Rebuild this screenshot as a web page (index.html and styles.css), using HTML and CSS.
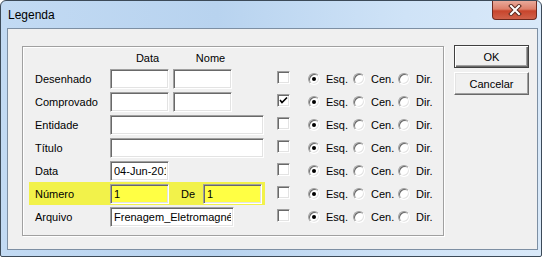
FILE: index.html
```html
<!DOCTYPE html>
<html lang="pt">
  <head>
    <meta charset="UTF-8" />
    <title>Legenda</title>
    <link rel="stylesheet" href="styles.css">
  </head>
  <body>
    <div class="window">
      <div class="titlebar">
        <span class="title">Legenda</span>
        <div class="close">
          <svg width="14" height="12" viewBox="0 0 14 12">
            <path d="M3 2 L11 10 M11 2 L3 10" stroke="#5a2a20" stroke-width="4" stroke-linecap="square" />
            <path d="M3 2 L11 10 M11 2 L3 10" stroke="#ffffff" stroke-width="2" stroke-linecap="square" />
          </svg>
        </div>
      </div>

      <div class="client">
        <div class="group">
          <div class="head">
            <span class="col">Data</span>
            <span class="col">Nome</span>
          </div>

          <div class="row">
            <div class="fields">
              <span class="label">Desenhado</span>
              <input class="field short" type="text" />
              <input class="field short gap" type="text" />
            </div>
            <span class="check"></span>
            <div class="align">
              <span class="opt"><span class="radio on"></span>Esq.</span>
              <span class="opt"><span class="radio"></span>Cen.</span>
              <span class="opt"><span class="radio"></span>Dir.</span>
            </div>
          </div>

          <div class="row">
            <div class="fields">
              <span class="label">Comprovado</span>
              <input class="field short" type="text" />
              <input class="field short gap" type="text" />
            </div>
            <span class="check">
              <svg width="11" height="11" viewBox="0 0 11 11">
                <path d="M2 5 L4 7.5 L9 2.5" fill="none" stroke="#000" stroke-width="1.6" />
              </svg>
            </span>
            <div class="align">
              <span class="opt"><span class="radio on"></span>Esq.</span>
              <span class="opt"><span class="radio"></span>Cen.</span>
              <span class="opt"><span class="radio"></span>Dir.</span>
            </div>
          </div>

          <div class="row">
            <div class="fields">
              <span class="label">Entidade</span>
              <input class="field wide" type="text" />
            </div>
            <span class="check"></span>
            <div class="align">
              <span class="opt"><span class="radio on"></span>Esq.</span>
              <span class="opt"><span class="radio"></span>Cen.</span>
              <span class="opt"><span class="radio"></span>Dir.</span>
            </div>
          </div>

          <div class="row">
            <div class="fields">
              <span class="label">Título</span>
              <input class="field wide" type="text" />
            </div>
            <span class="check"></span>
            <div class="align">
              <span class="opt"><span class="radio on"></span>Esq.</span>
              <span class="opt"><span class="radio"></span>Cen.</span>
              <span class="opt"><span class="radio"></span>Dir.</span>
            </div>
          </div>

          <div class="row">
            <div class="fields">
              <span class="label">Data</span>
              <input class="field short" type="text" value="04-Jun-2013" />
            </div>
            <span class="check"></span>
            <div class="align">
              <span class="opt"><span class="radio on"></span>Esq.</span>
              <span class="opt"><span class="radio"></span>Cen.</span>
              <span class="opt"><span class="radio"></span>Dir.</span>
            </div>
          </div>

          <div class="row">
            <div class="fields marked">
              <span class="label">Número</span>
              <input class="field short" type="text" value="1" />
              <span class="de">De</span>
              <input class="field short" type="text" value="1" />
            </div>
            <span class="check"></span>
            <div class="align">
              <span class="opt"><span class="radio on"></span>Esq.</span>
              <span class="opt"><span class="radio"></span>Cen.</span>
              <span class="opt"><span class="radio"></span>Dir.</span>
            </div>
          </div>

          <div class="row">
            <div class="fields">
              <span class="label">Arquivo</span>
              <input class="field file" type="text" value="Frenagem_Eletromagnética" />
            </div>
            <span class="check"></span>
            <div class="align">
              <span class="opt"><span class="radio on"></span>Esq.</span>
              <span class="opt"><span class="radio"></span>Cen.</span>
              <span class="opt"><span class="radio"></span>Dir.</span>
            </div>
          </div>
        </div>

        <div class="buttons">
          <button class="btn default">OK</button>
          <button class="btn">Cancelar</button>
        </div>
      </div>
    </div>
  </body>
</html>
```

FILE: styles.css
```css
* {
  margin: 0;
  padding: 0;
  box-sizing: border-box;
}

body {
  background: #ffffff;
  font-family: "Liberation Sans", Arial, sans-serif;
  font-size: 11px;
  color: #000;
}

/* Window frame */
.window {
  width: 542px;
  height: 257px;
  border: 1px solid #3c4a58;
  border-radius: 6px 6px 2px 2px;
  background: linear-gradient(to right, #c2daf3 0%, #b8d3ef 40%, #cfe3f7 75%, #d9e9f9 100%);
  display: flex;
  flex-direction: column;
}

.titlebar {
  height: 27px;
  display: flex;
  align-items: flex-start;
}

.title {
  font-size: 12px;
  padding: 7px 0 0 7px;
  color: #000;
}

.close {
  margin-left: auto;
  margin-right: 4px;
  width: 45px;
  height: 19px;
  border: 1px solid #6e2a1f;
  border-top: none;
  border-radius: 0 0 4px 4px;
  background: linear-gradient(to bottom, #e9a99a 0%, #dd7f6a 45%, #c8452c 55%, #d0614a 100%);
  display: flex;
  align-items: center;
  justify-content: center;
}

/* Client area */
.client {
  flex: 1;
  margin: 0 3px 6px 6px;
  border: 1px solid #7d8fa3;
  background: #f0f0f0;
  display: flex;
  align-items: flex-start;
}

.group {
  margin: 17px 0 0 14px;
  width: 422px;
  height: 190px;
  border: 1px solid #a0a0a0;
  box-shadow: inset 1px 1px 0 #ffffff, 1px 1px 0 #ffffff;
  padding: 5px 0 0 6px;
}

.head {
  height: 15px;
  padding-left: 87px;
  display: flex;
}

.col {
  width: 63px;
  text-align: center;
}

.row {
  height: 23px;
  display: flex;
  align-items: center;
}

.fields {
  width: 237px;
  height: 23px;
  padding-left: 6px;
  display: flex;
  align-items: center;
}

.fields.marked {
  background: #f2f24a;
}

.label {
  width: 75px;
}

.field {
  height: 20px;
  border: 1px solid;
  border-color: #a0a0a0 #ffffff #ffffff #a0a0a0;
  box-shadow: inset 1px 1px 0 #696969, inset -1px -1px 0 #e3e3e3;
  background: #ffffff;
  font-family: "Liberation Sans", Arial, sans-serif;
  font-size: 11px;
  padding: 1px 2px 0 3px;
  outline: none;
  color: #000;
}

.marked .field {
  background: #ffff44;
}

.short {
  width: 59px;
}

.gap {
  margin-left: 4px;
}

.wide {
  width: 154px;
}

.file {
  width: 124px;
}

.de {
  width: 22px;
  margin-left: 12px;
}

/* Check boxes and radio buttons */
.check {
  width: 13px;
  height: 13px;
  margin: -2px 0 0 12px;
  border: 1px solid;
  border-color: #a0a0a0 #ffffff #ffffff #a0a0a0;
  box-shadow: inset 1px 1px 0 #696969, inset -1px -1px 0 #e3e3e3;
  background: #ffffff;
  display: flex;
  align-items: center;
  justify-content: center;
}

.align {
  display: flex;
  margin-left: 18px;
}

.opt {
  width: 45px;
  display: flex;
  align-items: center;
}

.radio {
  width: 12px;
  height: 12px;
  margin-right: 6px;
  border-radius: 50%;
  border: 1px solid;
  border-color: #a0a0a0 #ffffff #ffffff #a0a0a0;
  box-shadow: inset 1px 1px 0 #696969, inset -1px -1px 0 #e3e3e3;
  background: #ffffff;
  display: flex;
  align-items: center;
  justify-content: center;
}

.radio.on::after {
  content: "";
  width: 4px;
  height: 4px;
  border-radius: 50%;
  background: #000;
}

/* Buttons */
.buttons {
  margin: 16px 0 0 10px;
  display: flex;
  flex-direction: column;
  gap: 4px;
}

.btn {
  width: 75px;
  height: 23px;
  background: #f0f0f0;
  border: 1px solid;
  border-color: #ffffff #696969 #696969 #ffffff;
  box-shadow: inset -1px -1px 0 #a0a0a0, inset 1px 1px 0 #e3e3e3;
  font-family: "Liberation Sans", Arial, sans-serif;
  font-size: 11px;
  color: #000;
}

.btn.default {
  border: 1px solid #404040;
  box-shadow: inset 1px 1px 0 #ffffff, inset -1px -1px 0 #696969, inset -2px -2px 0 #a0a0a0;
}
```
